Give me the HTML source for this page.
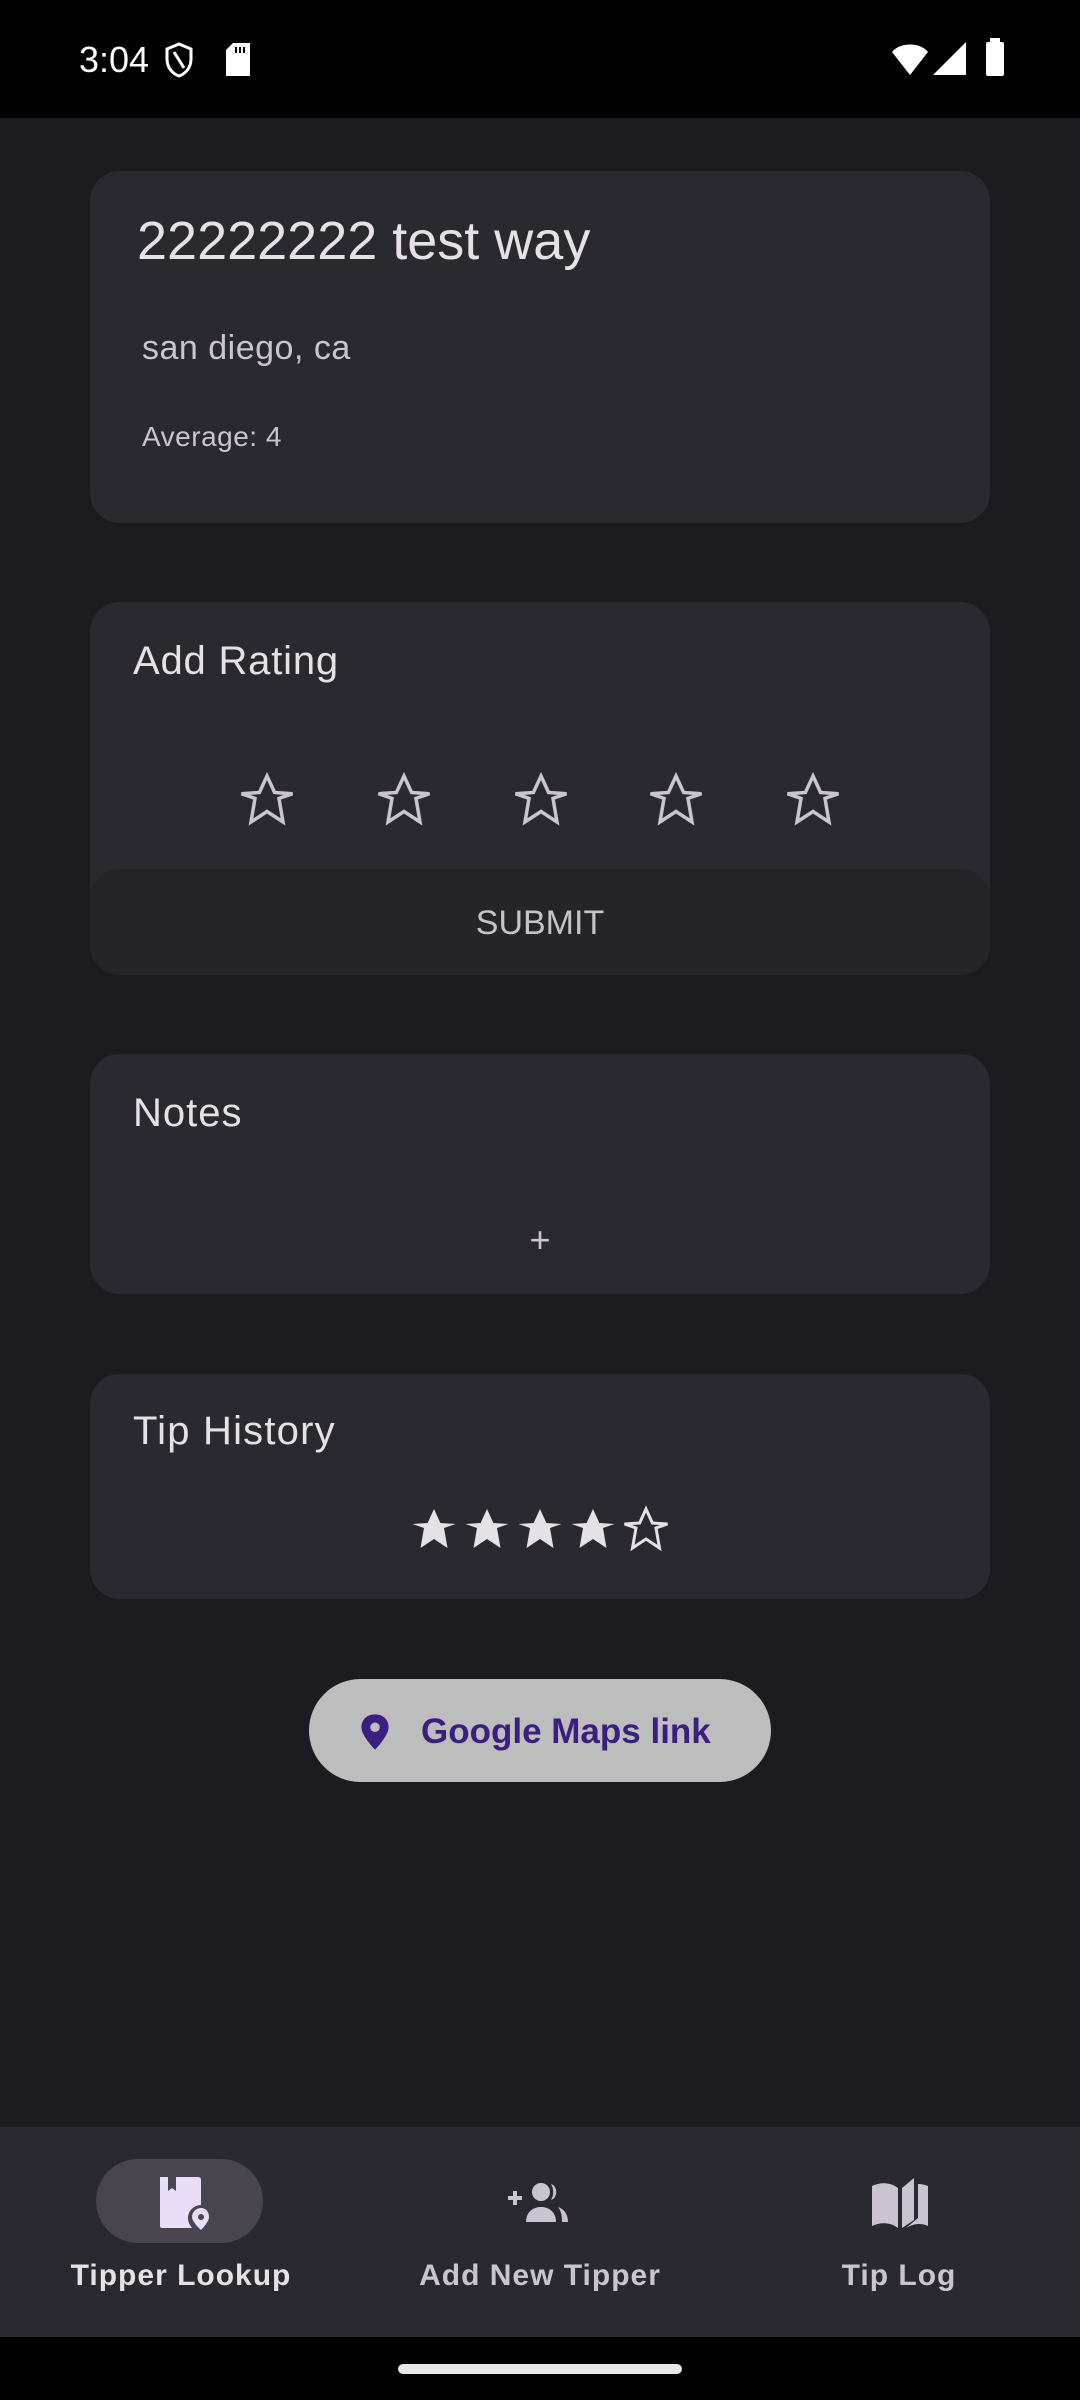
<!DOCTYPE html>
<html><head><meta charset="utf-8"><style>
*{margin:0;padding:0;box-sizing:border-box}
body{width:1080px;height:2400px;background:#1c1b1f;font-family:"Liberation Sans",sans-serif;position:relative;overflow:hidden;color:#e6e1e5}
.abs{position:absolute}
.card{position:absolute;left:90px;width:900px;background:#2b2930;border-radius:30px;overflow:hidden}
.t{position:absolute;white-space:nowrap;line-height:1}
</style></head><body>
<div class="abs" style="left:0;top:0;width:1080px;height:118px;background:#000"></div>
<div class="t" style="left:79px;top:42px;font-size:36px;color:#fff">3:04</div>
<svg class="abs" style="left:164px;top:42px" width="30" height="36" viewBox="0 0 30 36"><path d="M15 2 L27 7 V17 C27 26 21 32 15 34 C9 32 3 26 3 17 V7 Z" fill="none" stroke="#fff" stroke-width="3"/><path d="M10 10 L20 26" stroke="#fff" stroke-width="3"/></svg>
<svg class="abs" style="left:224px;top:43px" width="28" height="33" viewBox="0 0 28 33"><path d="M9 0 H26 V33 H2 V7 Z" fill="#fff"/><rect x="11" y="4" width="2" height="6" fill="#000"/><rect x="15" y="4" width="2" height="6" fill="#000"/><rect x="19" y="4" width="2" height="6" fill="#000"/></svg>
<svg class="abs" style="left:890px;top:42px" width="40" height="34" viewBox="0 0 40 34"><path d="M2 10 C10 0 30 0 38 10 L20 33 Z" fill="#fff"/></svg>
<svg class="abs" style="left:933px;top:42px" width="33" height="33"><path d="M33 0 V33 H0 Z" fill="#fff"/></svg>
<svg class="abs" style="left:984px;top:38px" width="22" height="38"><rect x="6" y="0" width="10" height="5" fill="#fff"/><rect x="2" y="4" width="18" height="34" rx="2" fill="#fff"/></svg>

<div class="card" style="top:171px;height:352px"></div>
<div class="t" style="left:137px;top:214px;font-size:54px;color:#e6e1e5">22222222 test way</div>
<div class="t" style="left:142px;top:331px;font-size:34px;color:#cac4d0;letter-spacing:0.5px">san diego, ca</div>
<div class="t" style="left:142px;top:423px;font-size:28px;color:#cac4d0;letter-spacing:0.5px">Average: 4</div>

<div class="card" style="top:602px;height:373px">
<div class="abs" style="left:0;top:267px;width:900px;height:106px;background:#252429;border-radius:30px 30px 0 0"></div>
</div>
<div class="t" style="left:133px;top:641px;font-size:40px;letter-spacing:0.8px">Add Rating</div>
<svg class="abs" style="left:0;top:770px" width="1080" height="64">
<defs><path id="s" d="M0-26 L7.6-9.5 L25.5-8.3 L12-3.6 L16 20 L0 9.5 L-16 20 L-12-3.6 L-25.5-8.3 L-7.6-9.5Z"/></defs>
<g fill="none" stroke="#cac4d0" stroke-width="3.5" stroke-linejoin="miter">
<use href="#s" x="267" y="32"/><use href="#s" x="404" y="32"/><use href="#s" x="541" y="32"/><use href="#s" x="676" y="32"/><use href="#s" x="813" y="32"/></g></svg>
<div class="t" style="left:0;width:1080px;text-align:center;top:906px;font-size:34px;color:#c5c3ca;font-weight:500">SUBMIT</div>

<div class="card" style="top:1054px;height:240px"></div>
<div class="t" style="left:133px;top:1093px;font-size:40px;letter-spacing:1px">Notes</div>
<div class="t" style="left:0;width:1080px;text-align:center;top:1222px;font-size:36px;color:#cac4d0">+</div>

<div class="card" style="top:1374px;height:225px"></div>
<div class="t" style="left:133px;top:1411px;font-size:40px;letter-spacing:1.2px">Tip History</div>
<svg class="abs" style="left:0;top:1505px" width="1080" height="52">
<defs><path id="f" d="M0-22 L6.4-8 L21.5-7 L10-3 L13.5 17 L0 8 L-13.5 17 L-10-3 L-21.5-7 L-6.4-8Z"/></defs>
<g fill="#e6e1e5"><use href="#f" x="434" y="26"/><use href="#f" x="487" y="26"/><use href="#f" x="540" y="26"/><use href="#f" x="593" y="26"/></g>
<use href="#f" x="646" y="26" fill="none" stroke="#e6e1e5" stroke-width="3"/></svg>

<div class="abs" style="left:309px;top:1679px;width:462px;height:103px;background:#bdbdbd;border-radius:52px"></div>
<svg class="abs" style="left:358px;top:1713px" width="34" height="38" viewBox="0 0 24 28"><path d="M12 1 C6 1 2 5 2 10.5 C2 17 12 27 12 27 C12 27 22 17 22 10.5 C22 5 18 1 12 1Z" fill="#3b1f80"/><circle cx="12" cy="10.5" r="3.5" fill="#bdbdbd"/></svg>
<div class="t" style="left:421px;top:1714px;font-size:35px;color:#3b1f80;font-weight:bold">Google Maps link</div>

<div class="abs" style="left:0;top:2127px;width:1080px;height:210px;background:#2b2930"></div>
<div class="abs" style="left:96px;top:2159px;width:167px;height:84px;background:#49454f;border-radius:42px"></div>
<svg class="abs" style="left:158px;top:2175px" width="52" height="56" viewBox="0 0 52 56"><path d="M2 2 H40 Q43 2 43 5 V30 C36 30 30 36 30 43 C30 47 32 50 34 53 H4 Q2 53 2 51Z" fill="#e8def8"/><path d="M10 2 V16 L14 13 L18 16 V2" fill="#49454f"/><path d="M43 33 C38 33 34 37 34 42 C34 47 43 55 43 55 C43 55 51 47 51 42 C51 37 48 33 43 33Z" fill="#e8def8"/><circle cx="43" cy="42" r="3" fill="#49454f"/></svg>
<div class="t" style="left:0;width:362px;text-align:center;top:2261px;font-size:30px;font-weight:bold;color:#e6e1e5;letter-spacing:1px">Tipper Lookup</div>
<svg class="abs" style="left:506px;top:2182px" width="66" height="40" viewBox="0 0 66 40"><rect x="2" y="14" width="14" height="4" fill="#cac4d0"/><rect x="7" y="9" width="4" height="14" fill="#cac4d0"/><circle cx="35" cy="10" r="9" fill="#cac4d0"/><path d="M20 40 C20 30 27 25 35 25 C43 25 50 30 50 40Z" fill="#cac4d0"/><path d="M45 2 C52 4 52 16 45 18 C48 13 48 7 45 2Z" fill="#cac4d0"/><path d="M52 25 C58 27 62 32 62 40 H56 C56 33 55 29 52 25Z" fill="#cac4d0"/></svg>
<div class="t" style="left:362px;width:356px;text-align:center;top:2261px;font-size:30px;font-weight:bold;color:#cac4d0;letter-spacing:1px">Add New Tipper</div>
<svg class="abs" style="left:870px;top:2176px" width="60" height="56" viewBox="0 0 60 56"><path d="M2 10 C10 6 20 6 28 12 V52 C20 46 10 46 2 50Z" fill="#cac4d0"/><path d="M32 12 L44 2 V44 L32 52Z" fill="#cac4d0"/><path d="M48 8 C52 8 55 9 58 10 V50 C52 47 44 47 36 52 L48 42Z" fill="#cac4d0"/></svg>
<div class="t" style="left:718px;width:362px;text-align:center;top:2261px;font-size:30px;font-weight:bold;color:#cac4d0;letter-spacing:1px">Tip Log</div>

<div class="abs" style="left:0;top:2337px;width:1080px;height:63px;background:#000"></div>
<div class="abs" style="left:398px;top:2364px;width:284px;height:10px;background:#e8e8e8;border-radius:5px"></div>
</body></html>
